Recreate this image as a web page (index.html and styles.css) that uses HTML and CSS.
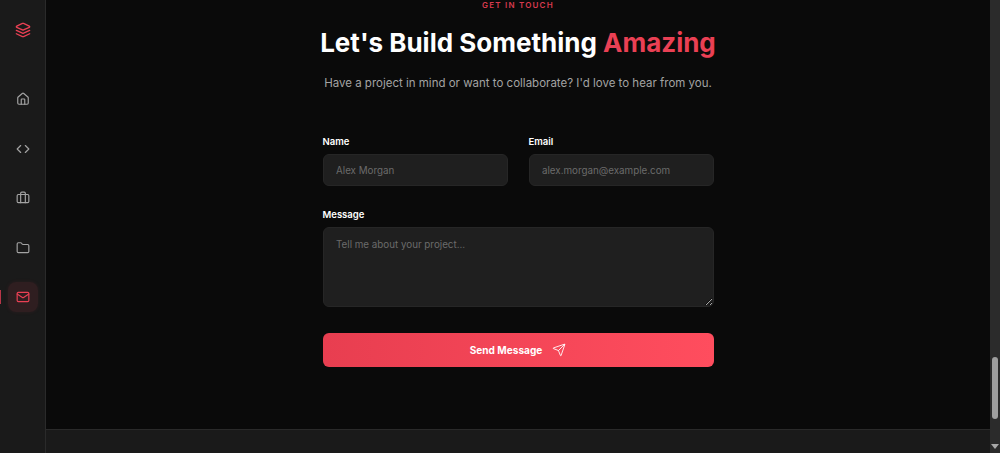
FILE: index.html
```html
<!DOCTYPE html>
<html>
<head>
    <meta charset="utf-8">
    <meta name="viewport" content="width=device-width, initial-scale=1">
    <title>Contact</title>
    <link rel="stylesheet" href="styles.css">
</head>
<body>
    <aside class="sidebar">
        <div class="logo">
            <svg class="icon logo-icon" viewBox="0 0 24 24"><path d="m12.83 2.18a2 2 0 0 0-1.66 0L2.6 6.08a1 1 0 0 0 0 1.83l8.58 3.91a2 2 0 0 0 1.66 0l8.58-3.9a1 1 0 0 0 0-1.83Z"/><path d="m22 17.65-9.17 4.16a2 2 0 0 1-1.66 0L2 17.65"/><path d="m22 12.65-9.17 4.16a2 2 0 0 1-1.66 0L2 12.65"/></svg>
        </div>
        <nav class="nav">
            <a class="nav-item">
                <svg class="icon" viewBox="0 0 24 24"><path d="M15 21v-8a1 1 0 0 0-1-1h-4a1 1 0 0 0-1 1v8"/><path d="M3 10a2 2 0 0 1 .709-1.528l7-5.999a2 2 0 0 1 2.582 0l7 5.999A2 2 0 0 1 21 10v9a2 2 0 0 1-2 2H5a2 2 0 0 1-2-2z"/></svg>
            </a>
            <a class="nav-item">
                <svg class="icon" viewBox="0 0 24 24"><polyline points="16 18 22 12 16 6"/><polyline points="8 6 2 12 8 18"/></svg>
            </a>
            <a class="nav-item">
                <svg class="icon" viewBox="0 0 24 24"><path d="M16 20V4a2 2 0 0 0-2-2h-4a2 2 0 0 0-2 2v16"/><rect width="20" height="14" x="2" y="6" rx="2"/></svg>
            </a>
            <a class="nav-item">
                <svg class="icon" viewBox="0 0 24 24"><path d="M20 20a2 2 0 0 0 2-2V8a2 2 0 0 0-2-2h-7.9a2 2 0 0 1-1.69-.9L9.6 3.9A2 2 0 0 0 7.93 3H4a2 2 0 0 0-2 2v13a2 2 0 0 0 2 2Z"/></svg>
            </a>
            <a class="nav-item active">
                <svg class="icon" viewBox="0 0 24 24"><rect width="20" height="16" x="2" y="4" rx="2"/><path d="m22 7-8.97 5.7a1.94 1.94 0 0 1-2.06 0L2 7"/></svg>
            </a>
        </nav>
    </aside>

    <div class="page">
        <main class="contact">
            <p class="eyebrow">GET IN TOUCH</p>
            <h1>Let's Build Something <span class="accent">Amazing</span></h1>
            <p class="lead">Have a project in mind or want to collaborate? I'd love to hear from you.</p>

            <form class="contact-form">
                <div class="form-row">
                    <div class="form-group">
                        <label for="name">Name</label>
                        <input type="text" id="name" placeholder="Alex Morgan">
                    </div>
                    <div class="form-group">
                        <label for="email">Email</label>
                        <input type="text" id="email" placeholder="alex.morgan@example.com">
                    </div>
                </div>
                <div class="form-group">
                    <label for="message">Message</label>
                    <textarea id="message" placeholder="Tell me about your project..."></textarea>
                </div>
                <button type="button" class="send-button">
                    Send Message
                    <svg class="icon send-icon" viewBox="0 0 24 24"><path d="M14.536 21.686a.5.5 0 0 0 .937-.024l6.5-19a.496.496 0 0 0-.635-.635l-19 6.5a.5.5 0 0 0-.024.937l7.93 3.18a2 2 0 0 1 1.112 1.11z"/><path d="m21.854 2.147-10.94 10.939"/></svg>
                </button>
            </form>
        </main>
        <footer class="footer"></footer>
    </div>

    <div class="scrollbar">
        <div class="scroll-thumb"></div>
        <div class="scroll-arrow"></div>
    </div>
</body>
</html>
```

FILE: styles.css
```css
html, body {
    height: 100%;
}
body {
    margin: 0;
    display: flex;
    overflow: hidden;
    background: #0a0a0a;
    color: #fff;
    font-family: Inter, "Liberation Sans", sans-serif;
}
.icon {
    width: 14px;
    height: 14px;
    fill: none;
    stroke: currentColor;
    stroke-width: 2;
    stroke-linecap: round;
    stroke-linejoin: round;
}
.sidebar {
    width: 45px;
    flex-shrink: 0;
    background: #1a1a1a;
    border-right: 1px solid #2a2a2a;
    display: flex;
    flex-direction: column;
    align-items: center;
}
.logo {
    height: 16px;
    margin-top: 22px;
    color: #ea4054;
}
.logo-icon {
    width: 16px;
    height: 16px;
}
.nav {
    margin-top: 46px;
    display: flex;
    flex-direction: column;
    gap: 19.5px;
}
.nav-item {
    position: relative;
    width: 30px;
    height: 30px;
    border-radius: 8px;
    display: flex;
    align-items: center;
    justify-content: center;
    color: #a3a3a3;
}
.nav-item.active {
    background: rgba(234, 64, 84, 0.1);
    box-shadow: 0 0 4px rgba(234, 64, 84, 0.08);
    color: #ea4054;
}
.nav-item.active::before {
    content: "";
    position: absolute;
    left: -8px;
    top: 8px;
    width: 1px;
    height: 14px;
    background: #b83648;
}
.page {
    flex: 1;
    min-width: 0;
    display: flex;
    flex-direction: column;
}
.contact {
    flex: 1;
    display: flex;
    flex-direction: column;
    align-items: center;
}
.eyebrow {
    margin: 0;
    font-size: 8px;
    line-height: 10px;
    font-weight: 600;
    letter-spacing: 1.2px;
    color: #d83a4e;
}
h1 {
    margin: 16px 0 0;
    font-size: 26px;
    line-height: 34px;
    font-weight: 700;
}
.accent {
    color: #ea4054;
}
.lead {
    margin: 13px 0 0;
    font-size: 11.5px;
    line-height: 20px;
    color: #a3a3a3;
}
.contact-form {
    width: 391px;
    margin-top: 43px;
}
.form-row {
    display: flex;
    gap: 21px;
}
.form-row .form-group {
    flex: 1;
}
.form-group {
    margin-bottom: 22.5px;
}
label {
    display: block;
    margin-bottom: 6px;
    font-size: 9.5px;
    line-height: 12px;
    font-weight: 600;
}
input[type="text"], textarea {
    display: block;
    width: 100%;
    box-sizing: border-box;
    padding: 0 12.5px;
    background: #1f1f1f;
    border: 1px solid #262626;
    border-radius: 6px;
    color: #fff;
    font-family: inherit;
    font-size: 9.8px;
    outline: none;
}
input[type="text"] {
    height: 32px;
}
textarea {
    height: 80px;
    padding-top: 10px;
    padding-bottom: 10px;
    line-height: 14px;
    resize: vertical;
}
::placeholder {
    color: #6b6b6b;
    opacity: 1;
}
.send-button {
    width: 100%;
    height: 34px;
    margin-top: 26px;
    border: none;
    border-radius: 6px;
    background: linear-gradient(90deg, #e83e50, #ff4d5e);
    color: #fff;
    font-family: inherit;
    font-size: 10.1px;
    font-weight: 700;
    display: flex;
    align-items: center;
    justify-content: center;
    gap: 10px;
}
.send-icon {
    width: 14px;
    height: 14px;
    stroke-width: 1.5;
}
.footer {
    height: 23px;
    flex-shrink: 0;
    background: #1a1a1a;
    border-top: 1px solid #2a2a2a;
}
.scrollbar {
    width: 10px;
    flex-shrink: 0;
    background: #2b2b2b;
    display: flex;
    flex-direction: column;
    align-items: center;
    padding-top: 357px;
    box-sizing: border-box;
}
.scroll-thumb {
    width: 6px;
    height: 62px;
    border-radius: 3px;
    background: #9e9e9e;
}
.scroll-arrow {
    margin-top: 25px;
    border-left: 4px solid transparent;
    border-right: 4px solid transparent;
    border-top: 5px solid #a8a8a8;
}
```
